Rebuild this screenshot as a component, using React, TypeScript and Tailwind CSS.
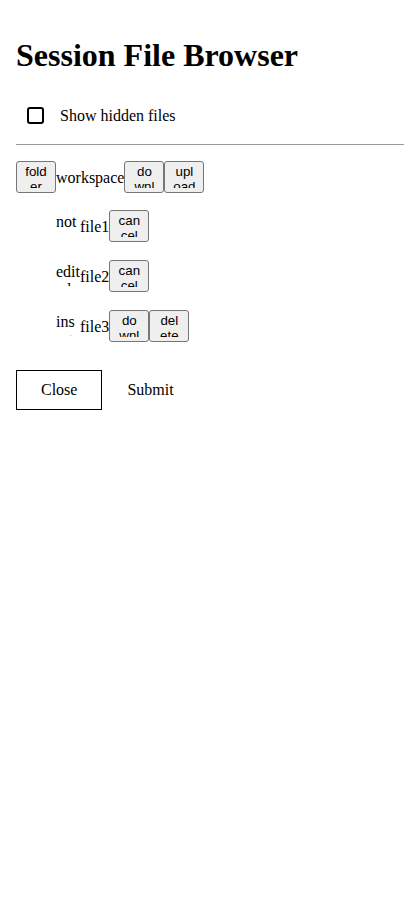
import { ReactNode } from 'react';

type FileEntry = {
  name: string;
  status: string;
  actions: string[];
};

const files: FileEntry[] = [
  { name: 'file1', status: 'not saved', actions: ['cancel'] },
  { name: 'file2', status: 'edited', actions: ['cancel'] },
  { name: 'file3', status: 'inserted', actions: ['download', 'delete'] },
];

// native-looking tiny button; fixed size, long labels get clipped
function SmallButton({ children }: { children: ReactNode }) {
  return (
    <button
      type="button"
      className="flex h-8 w-10 shrink-0 flex-col items-center justify-start overflow-hidden rounded-[3px] border border-[#767676] bg-[#efefef] px-[7px] pt-[2px] text-center font-['Liberation_Sans',Arial,sans-serif] text-[13.33px] leading-[normal] text-black"
    >
      <span className="block h-6 w-full overflow-hidden break-all">{children}</span>
    </button>
  );
}

function FileRow({ file }: { file: FileEntry }) {
  return (
    <li className="flex h-8 items-center">
      <span className="mt-[3px] h-[23px] w-6 shrink-0 self-start overflow-hidden break-all leading-[normal]">
        {file.status}
      </span>
      <span className="mt-[3px] leading-[normal]">{file.name}</span>
      {file.actions.map((a) => (
        <SmallButton key={a}>{a}</SmallButton>
      ))}
    </li>
  );
}

export default function App() {
  return (
    <div className="min-h-screen bg-white p-4 font-['Liberation_Serif','Times_New_Roman',serif] text-base text-black">
      <h1 className="my-[21.44px] text-[32px] font-bold leading-[normal]">Session File Browser</h1>

      <label className="flex h-10 items-center gap-4 px-[11px]">
        <input
          type="checkbox"
          className="m-0 h-[17px] w-[17px] appearance-none rounded-[3px] border-2 border-black bg-white"
        />
        <span className="leading-[normal]">Show hidden files</span>
      </label>

      <hr className="mt-2 border-[#9a9a9a]" />

      <ul className="mt-4">
        <li>
          <div className="flex h-8 items-center">
            <SmallButton>folder</SmallButton>
            <span className="mt-[3px] leading-[normal]">workspace</span>
            <SmallButton>download</SmallButton>
            <SmallButton>upload</SmallButton>
          </div>
          <ul className="mt-[17px] flex flex-col gap-[18px] pl-10">
            {files.map((f) => (
              <FileRow key={f.name} file={f} />
            ))}
          </ul>
        </li>
      </ul>

      <div className="mt-[28px] flex">
        <button type="button" className="h-10 border border-black px-6 leading-[normal]">
          Close
        </button>
        <button type="button" className="h-10 border border-transparent px-6 leading-[normal]">
          Submit
        </button>
      </div>
    </div>
  );
}
